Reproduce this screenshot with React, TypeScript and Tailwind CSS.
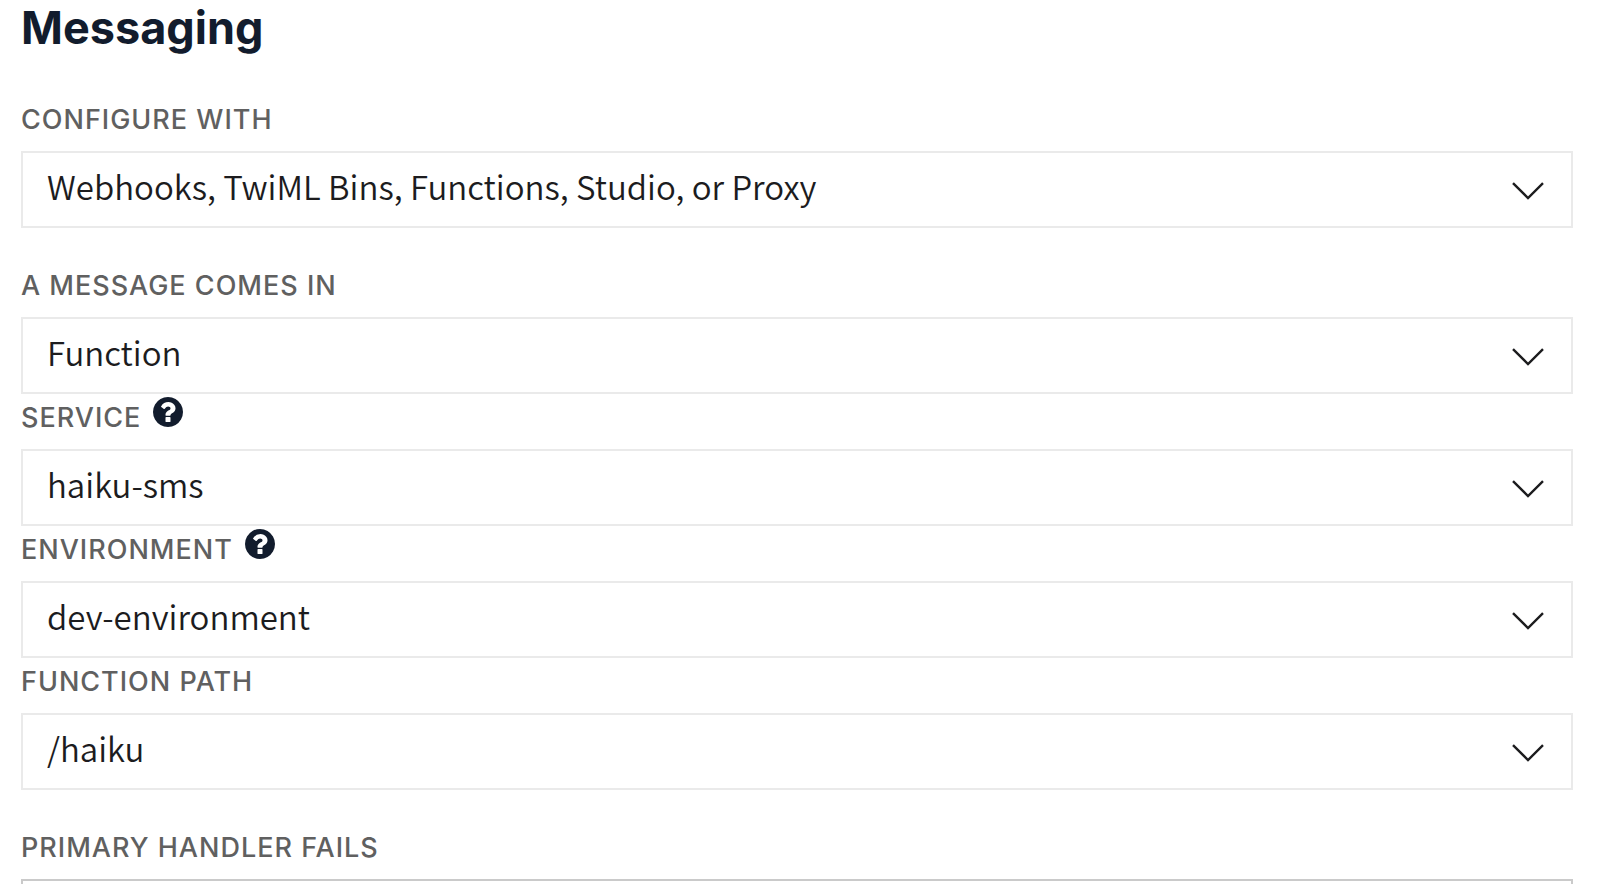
import { useState } from "react";

interface Field {
  id: string;
  label: string;
  value: string;
  hasHelp?: boolean;
  startsGroup?: boolean;
}

const fields: Field[] = [
  {
    id: "configure-with",
    label: "CONFIGURE WITH",
    value: "Webhooks, TwiML Bins, Functions, Studio, or Proxy",
    startsGroup: true,
  },
  { id: "message-comes-in", label: "A MESSAGE COMES IN", value: "Function", startsGroup: true },
  { id: "service", label: "SERVICE", value: "haiku-sms", hasHelp: true },
  { id: "environment", label: "ENVIRONMENT", value: "dev-environment", hasHelp: true },
  { id: "function-path", label: "FUNCTION PATH", value: "/haiku" },
];

function ChevronIcon() {
  return (
    <svg
      viewBox="0 0 32 18"
      className="pointer-events-none absolute top-[31px] right-[29px] h-[18px] w-8"
      fill="none"
      stroke="#1c1c1e"
      strokeWidth="2.4"
      aria-hidden="true"
    >
      <path d="M1 1.2 L16 16 L31 1.2" />
    </svg>
  );
}

function HelpIcon() {
  return (
    <svg viewBox="128 128 1536 1536" className="size-[30px]" fill="#121c2d" aria-hidden="true">
      <path d="M1024 1376v-192q0-14-9-23t-23-9h-192q-14 0-23 9t-9 23v192q0 14 9 23t23 9h192q14 0 23-9t9-23zm256-672q0-88-55.5-163t-138.5-116-170-41q-243 0-371 213-15 24 8 42l132 100q7 6 19 6 16 0 25-12 53-68 86-92 34-24 86-24 48 0 85.5 26t37.5 59q0 38-20 61t-68 45q-63 28-115.5 86.5t-52.5 125.5v36q0 14 9 23t23 9h192q14 0 23-9t9-23q0-19 21.5-49.5t54.5-49.5q32-18 49-28.5t46-35 44.5-48 28-60.5 12.5-81zm384 192q0 209-103 385.5t-279.5 279.5-385.5 103-385.5-103-279.5-279.5-103-385.5 103-385.5 279.5-279.5 385.5-103 385.5 103 279.5 279.5 103 385.5z" />
    </svg>
  );
}

function SelectField({ field }: { field: Field }) {
  const [value, setValue] = useState(field.value);

  return (
    <div className={field.startsGroup ? "not-first:mt-[34px]" : ""}>
      <div className="flex items-start gap-3 pt-[3px] pb-[15px]">
        <label htmlFor={field.id} className="pt-[5px] text-[27px] leading-8 font-medium tracking-[1px] text-[#606060]">
          {field.label}
        </label>
        {field.hasHelp && (
          <button type="button" className="-mb-4" aria-label={`${field.label} help`}>
            <HelpIcon />
          </button>
        )}
      </div>
      <div className="relative">
        <select
          id={field.id}
          value={value}
          onChange={(e) => setValue(e.target.value)}
          className="block h-[77px] w-full appearance-none border-2 border-[#eaeaea] bg-white pr-20 pb-1.5 pl-6 font-['Noto_Sans_CJK_SC',sans-serif] text-[33px] font-[350] text-[#1c1c1e]"
        >
          <option value={field.value}>{field.value}</option>
        </select>
        <ChevronIcon />
      </div>
    </div>
  );
}

export default function App() {
  return (
    <main className="h-screen overflow-hidden bg-white pt-1 pr-[27px] pl-[21px] font-['Inter',sans-serif]">
      <h1 className="text-[45px] leading-12 font-bold text-[#121c2d]">Messaging</h1>

      <form className="mt-11">
        {fields.map((field) => (
          <SelectField key={field.id} field={field} />
        ))}

        <div className="mt-[34px]">
          <div className="flex items-start pt-[3px] pb-[15px]">
            <label htmlFor="handler-fails" className="pt-[5px] text-[27px] leading-8 font-medium tracking-[1px] text-[#606060]">
              PRIMARY HANDLER FAILS
            </label>
          </div>
          <input
            id="handler-fails"
            type="text"
            className="block h-[77px] w-full border-2 border-[#cacaca] bg-white px-6 text-[33px]"
          />
        </div>
      </form>
    </main>
  );
}
